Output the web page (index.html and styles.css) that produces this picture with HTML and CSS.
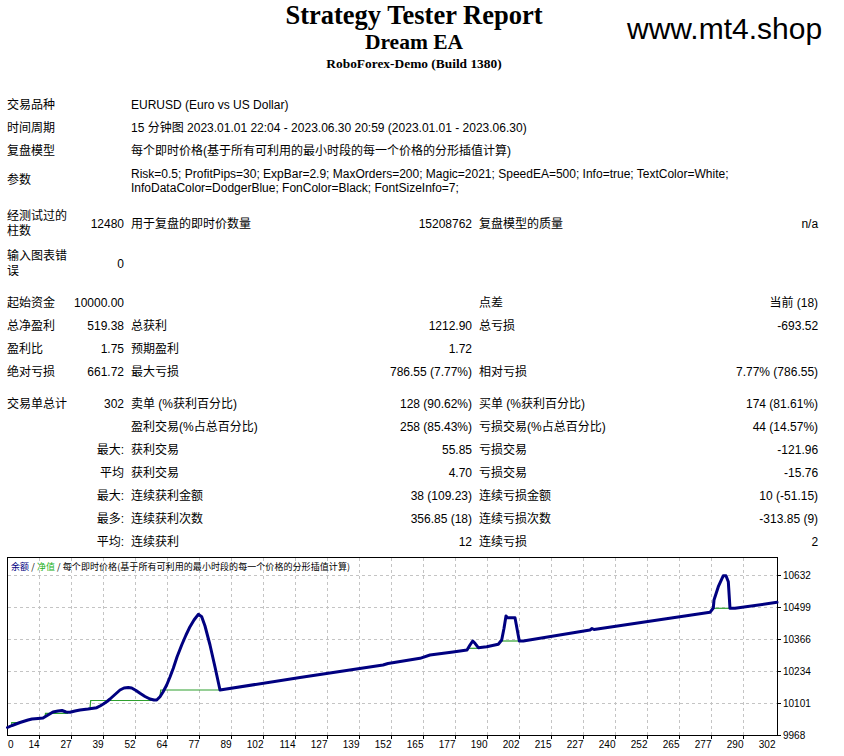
FILE: index.html
```html
<!DOCTYPE html>
<html lang="zh-CN">
<head>
<meta charset="utf-8">
<title>Strategy Tester Report</title>
<link rel="stylesheet" href="styles.css">
</head>
<body>
<header class="report-head">
  <h1 class="title">Strategy Tester Report</h1>
  <div class="ea-name">Dream EA</div>
  <div class="server">RoboForex-Demo (Build 1380)</div>
  <div class="watermark">www.mt4.shop</div>
</header>

<table class="stats">
  <colgroup>
    <col class="c1"><col class="c2"><col class="c3"><col class="c4"><col class="c5"><col class="c6">
  </colgroup>
  <tr class="r"><td colspan="2">交易品种</td><td colspan="4" class="lab">EURUSD (Euro vs US Dollar)</td></tr>
  <tr class="r"><td colspan="2">时间周期</td><td colspan="4" class="lab">15 分钟图 2023.01.01 22:04 - 2023.06.30 20:59 (2023.01.01 - 2023.06.30)</td></tr>
  <tr class="r"><td colspan="2">复盘模型</td><td colspan="4" class="lab">每个即时价格(基于所有可利用的最小时段的每一个价格的分形插值计算)</td></tr>
  <tr class="r-params"><td colspan="2">参数</td><td colspan="4" class="lab params">Risk=0.5; ProfitPips=30; ExpBar=2.9; MaxOrders=200; Magic=2021; SpeedEA=500; Info=true; TextColor=White; InfoDataColor=DodgerBlue; FonColor=Black; FontSizeInfo=7;</td></tr>
  <tr class="sp6"><td colspan="6"></td></tr>
  <tr class="r-wrap"><td>经测试过的柱数</td><td class="num">12480</td><td class="lab">用于复盘的即时价数量</td><td class="num">15208762</td><td class="lab">复盘模型的质量</td><td class="num">n/a</td></tr>
  <tr class="r-wrap"><td>输入图表错误</td><td class="num">0</td><td colspan="4"></td></tr>
  <tr class="sp8"><td colspan="6"></td></tr>
  <tr class="r"><td>起始资金</td><td class="num">10000.00</td><td></td><td></td><td class="lab">点差</td><td class="num">当前 (18)</td></tr>
  <tr class="r"><td>总净盈利</td><td class="num">519.38</td><td class="lab">总获利</td><td class="num">1212.90</td><td class="lab">总亏损</td><td class="num">-693.52</td></tr>
  <tr class="r"><td>盈利比</td><td class="num">1.75</td><td class="lab">预期盈利</td><td class="num">1.72</td><td></td><td></td></tr>
  <tr class="r"><td>绝对亏损</td><td class="num">661.72</td><td class="lab">最大亏损</td><td class="num">786.55 (7.77%)</td><td class="lab">相对亏损</td><td class="num">7.77% (786.55)</td></tr>
  <tr class="sp9"><td colspan="6"></td></tr>
  <tr class="r"><td>交易单总计</td><td class="num">302</td><td class="lab">卖单 (%获利百分比)</td><td class="num">128 (90.62%)</td><td class="lab">买单 (%获利百分比)</td><td class="num">174 (81.61%)</td></tr>
  <tr class="r"><td></td><td></td><td class="lab">盈利交易(%占总百分比)</td><td class="num">258 (85.43%)</td><td class="lab">亏损交易(%占总百分比)</td><td class="num">44 (14.57%)</td></tr>
  <tr class="r"><td></td><td class="num">最大:</td><td class="lab">获利交易</td><td class="num">55.85</td><td class="lab">亏损交易</td><td class="num">-121.96</td></tr>
  <tr class="r"><td></td><td class="num">平均</td><td class="lab">获利交易</td><td class="num">4.70</td><td class="lab">亏损交易</td><td class="num">-15.76</td></tr>
  <tr class="r"><td></td><td class="num">最大:</td><td class="lab">连续获利金额</td><td class="num">38 (109.23)</td><td class="lab">连续亏损金额</td><td class="num">10 (-51.15)</td></tr>
  <tr class="r"><td></td><td class="num">最多:</td><td class="lab">连续获利次数</td><td class="num">356.85 (18)</td><td class="lab">连续亏损次数</td><td class="num">-313.85 (9)</td></tr>
  <tr class="r"><td></td><td class="num">平均:</td><td class="lab">连续获利</td><td class="num">12</td><td class="lab">连续亏损</td><td class="num">2</td></tr>
</table>

<svg class="chart" width="844" height="202" viewBox="0 554 844 202" xmlns="http://www.w3.org/2000/svg">
  <rect class="frame" x="7.5" y="557.5" width="770" height="178"/>
  <path class="grid" d="M39.5 558V735M71.5 558V735M103.5 558V735M135.5 558V735M167.5 558V735M199.5 558V735M231.5 558V735M263.5 558V735M295.5 558V735M327.5 558V735M359.5 558V735M391.5 558V735M423.5 558V735M455.5 558V735M487.5 558V735M519.5 558V735M551.5 558V735M583.5 558V735M615.5 558V735M647.5 558V735M679.5 558V735M711.5 558V735M743.5 558V735M8 575.5H777M8 607.5H777M8 639.5H777M8 671.5H777M8 703.5H777"/>
  <path class="tick" d="M778 575.5H781M778 607.5H781M778 639.5H781M778 671.5H781M778 703.5H781M778 735.5H781M39.5 736V739M71.5 736V739M103.5 736V739M135.5 736V739M167.5 736V739M199.5 736V739M231.5 736V739M263.5 736V739M295.5 736V739M327.5 736V739M359.5 736V739M391.5 736V739M423.5 736V739M455.5 736V739M487.5 736V739M519.5 736V739M551.5 736V739M583.5 736V739M615.5 736V739M647.5 736V739M679.5 736V739M711.5 736V739M743.5 736V739"/>

  <text class="legend" x="11" y="569.5" textLength="339" lengthAdjust="spacing"><tspan class="lg-bal">余额</tspan> / <tspan class="lg-eq">净值</tspan> / 每个即时价格(基于所有可利用的最小时段的每一个价格的分形插值计算)</text>

  <g class="equity">
    <polyline points="9,727 11.7,726 11.7,722.5 22,722.5"/>
    <polyline points="45,717 45.5,713.3 68.3,713.3"/>
    <polyline points="90,708.5 90.7,700.5 156.7,700.5"/>
    <polyline points="160,697 160.7,690 220,690"/>
    <polyline points="468.3,648.3 478.3,648.3"/>
    <polyline points="500,641 520,641"/>
    <polyline points="713.3,608.3 730,608.3"/>
  </g>
  <polyline class="balance" points="7.5,727.5 12,725.5 20,722.5 28,720 32,719 38,718.5 43,718 48,715 53,712 58,711 62,710.5 66,712 70,712.3 75,711 80,710 88,709 96.7,707.7 100,706 103.3,704 107,701.5 110,699 115,694.5 120,690 124,688 128.3,687.5 131.7,688 136,690.5 140,693.3 145,696.5 150,699 154,700 156.7,700 160,696.7 163,692 166.7,685 170,677 173.3,668.3 177,657 181.7,645 186,635 190,626.7 194,620 198.3,614.3 201.7,616.7 205,626 210,645 215,667 220,690 300,677.5 383,665 388,663.5 420,658.3 430,655 453,652 467,650 470,645 472.7,641 475,643.3 478.3,647.7 486.7,646.7 498.3,644.3 501.7,640 504,628.3 506,616 507.3,617.7 515,617.7 519.3,641 523.3,641 590,630 592,628.5 594,629.5 710,612.3 713.3,608 714,600 718.3,586.7 723.3,575.7 726,575.7 728.3,581.7 730,608.3 735,608.3 777,602.3"/>

  <g class="ylab">
    <text x="783" y="579">10632</text>
    <text x="783" y="611">10499</text>
    <text x="783" y="643">10366</text>
    <text x="783" y="675">10234</text>
    <text x="783" y="707">10101</text>
    <text x="783" y="739">9968</text>
  </g>
  <g class="xlab">
    <text x="8" y="747.5" class="first">0</text>
    <text x="39.5" y="747.5">14</text>
    <text x="71.5" y="747.5">27</text>
    <text x="103.5" y="747.5">39</text>
    <text x="135.5" y="747.5">52</text>
    <text x="167.5" y="747.5">64</text>
    <text x="199.5" y="747.5">77</text>
    <text x="231.5" y="747.5">89</text>
    <text x="263.5" y="747.5">102</text>
    <text x="295.5" y="747.5">114</text>
    <text x="327.5" y="747.5">127</text>
    <text x="359.5" y="747.5">139</text>
    <text x="391.5" y="747.5">152</text>
    <text x="423.5" y="747.5">165</text>
    <text x="455.5" y="747.5">177</text>
    <text x="487.5" y="747.5">190</text>
    <text x="519.5" y="747.5">202</text>
    <text x="551.5" y="747.5">215</text>
    <text x="583.5" y="747.5">227</text>
    <text x="615.5" y="747.5">240</text>
    <text x="647.5" y="747.5">252</text>
    <text x="679.5" y="747.5">265</text>
    <text x="711.5" y="747.5">277</text>
    <text x="743.5" y="747.5">290</text>
    <text x="775.5" y="747.5">302</text>
  </g>
</svg>
</body>
</html>
```

FILE: styles.css
```css
* { box-sizing: border-box; }

html, body {
  margin: 0;
  padding: 0;
  background: #fff;
}

body {
  width: 844px;
  height: 756px;
  overflow: hidden;
  color: #000;
  font-family: "Liberation Sans", "Noto Sans CJK SC", sans-serif;
  font-size: 12px;
}

/* ---------- header ---------- */
.report-head {
  position: relative;
  width: 814px;
  height: 94px;
  margin-left: 7px;
  text-align: center;
  font-family: "Liberation Serif", "Noto Serif CJK SC", serif;
  font-weight: bold;
}

.title {
  margin: 0;
  font-size: 26.5px;
  line-height: 31px;
  font-weight: bold;
}

.ea-name {
  font-size: 21.5px;
  line-height: 23px;
}

.server {
  font-size: 13.4px;
  line-height: 19px;
}

.watermark {
  position: absolute;
  left: 620px;
  top: 12px;
  font-family: "Liberation Sans", sans-serif;
  font-weight: normal;
  font-size: 30px;
  line-height: 34px;
  color: #000;
}

/* ---------- statistics table ---------- */
.stats {
  width: 814px;
  margin-left: 7px;
  border-collapse: collapse;
  table-layout: fixed;
}

.c1 { width: 62px; }
.c2 { width: 58px; }
.c3 { width: 200px; }
.c4 { width: 148px; }
.c5 { width: 200px; }
.c6 { width: 146px; }

.stats td {
  padding: 0;
  vertical-align: middle;
  line-height: 15px;
  white-space: normal;
  text-align: left;
}

.stats td.num {
  text-align: right;
  padding-right: 3px;
  white-space: nowrap;
}

.stats td.lab {
  padding-left: 4px;
  white-space: nowrap;
}

.stats td.params {
  white-space: normal;
  line-height: 14px;
}

.r { height: 23px; }
.r-params { height: 35px; }
.r-wrap { height: 40px; }
.sp6 { height: 6px; }
.sp8 { height: 8px; }
.sp9 { height: 9px; }

/* ---------- chart ---------- */
.chart {
  display: block;
}

.frame {
  fill: #fff;
  stroke: #000;
  stroke-width: 1;
}

.grid {
  fill: none;
  stroke: #c4c4c4;
  stroke-width: 1;
  stroke-dasharray: 3 3;
}

.tick {
  fill: none;
  stroke: #000;
  stroke-width: 1;
}

.legend {
  font-family: "Noto Sans CJK SC", "Liberation Sans", sans-serif;
  font-size: 9px;
  fill: #000;
}

.lg-bal { fill: #000080; }
.lg-eq { fill: #22b022; }

.equity polyline {
  fill: none;
  stroke: #2ea02e;
  stroke-width: 1.2;
}

.balance {
  fill: none;
  stroke: #000080;
  stroke-width: 3;
  stroke-linejoin: round;
  stroke-linecap: round;
}

.ylab text,
.xlab text {
  font-family: "Liberation Sans", sans-serif;
  font-size: 10px;
  fill: #000;
}

.xlab text { text-anchor: end; }
.xlab text.first { text-anchor: start; }
```
